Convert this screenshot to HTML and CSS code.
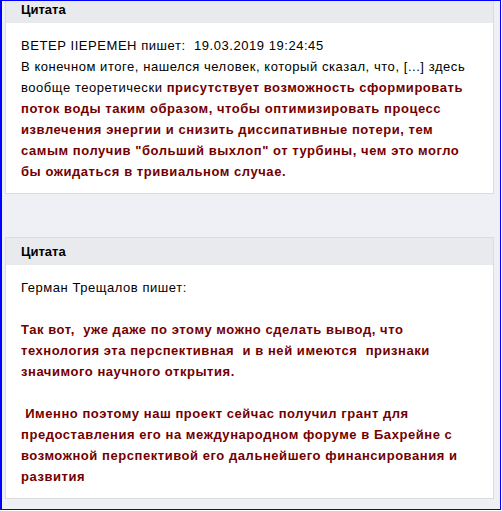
FILE: index.html
```html
<!DOCTYPE html>
<html lang="ru">
<head>
<meta charset="utf-8">
<title>Цитата</title>
<link rel="stylesheet" href="styles.css">
</head>
<body>
<div class="frame">
  <div class="quote quote-first">
    <div class="quote-head">Цитата</div>
    <div class="quote-body">ВЕТЕР IIЕРЕМЕН пишет:&nbsp; 19.03.2019 19:24:45<br>В конечном итоге, нашелся человек, который сказал, что, [...] здесь вообще теоретически <b class="hl">присутствует возможность сформировать поток воды таким образом, чтобы оптимизировать процесс извлечения энергии и снизить диссипативные потери, тем самым получив "больший выхлоп" от турбины, чем это могло бы ожидаться в тривиальном случае.</b></div>
  </div>
  <div class="quote quote-second">
    <div class="quote-head">Цитата</div>
    <div class="quote-body">Герман Трещалов пишет:<br><br><b class="hl">Так вот,&nbsp; уже даже по этому можно сделать вывод, что технология эта перспективная&nbsp; и в ней имеются&nbsp; признаки значимого научного открытия.</b><br><br><b class="hl">&nbsp;Именно поэтому наш проект сейчас получил грант для предоставления его на международном форуме в Бахрейне с возможной перспективой его дальнейшего финансирования и развития</b></div>
  </div>
</div>
</body>
</html>
```
FILE: styles.css
```css
html, body {
  margin: 0;
  padding: 0;
  background: #ffffff;
}

.frame {
  box-sizing: border-box;
  width: 501px;
  height: 510px;
  border: 1px solid #0000ff;
  border-left-width: 2px;
  background: #eef0f5;
  padding: 0 6px 0 3px;
  overflow: hidden;
  font-family: "Liberation Sans", Arial, sans-serif;
  font-size: 13px;
  color: #000000;
}

.quote {
  background: #ffffff;
  border: 1px solid #dcdcdc;
}

.quote-first {
  margin-top: -6px;
}

.quote-second {
  margin-top: 43px;
}

.quote-head {
  background: #e9eaed;
  font-weight: bold;
  line-height: 16px;
  padding: 6px 15px 5px 15px;
}

.quote-body {
  line-height: 21px;
  letter-spacing: 0.55px;
  padding: 12px 15px 11px 15px;
}

.hl {
  color: #730000;
}
```
